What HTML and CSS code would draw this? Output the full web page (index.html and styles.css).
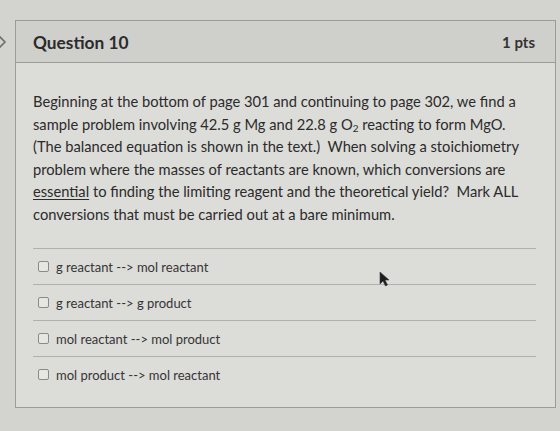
FILE: index.html
```html
<!DOCTYPE html>
<html lang="en">
<head>
  <meta charset="UTF-8">
  <meta name="viewport" content="width=device-width, initial-scale=1.0">
  <title>Question 10</title>
  <link rel="stylesheet" href="styles.css">
</head>
<body>
  <div class="page">
    <!-- Left gutter with the collapse arrow -->
    <div class="gutter">
      <svg class="chevron" width="8" height="14" viewBox="0 0 8 14">
        <path d="M-1 1 L5 7 L-1 13" fill="none" stroke="#6f6f6c" stroke-width="1.6"/>
      </svg>
    </div>

    <div class="question">
      <div class="question-header">
        <span class="question-title">Question 10</span>
        <span class="question-points">1 pts</span>
      </div>

      <div class="question-body">
        <p class="question-text">
          Beginning at the bottom of page 301 and continuing to page 302, we find a<br>
          sample problem involving 42.5 g Mg and 22.8 g O<sub>2</sub> reacting to form MgO.<br>
          (The balanced equation is shown in the text.)&nbsp; When solving a stoichiometry<br>
          problem where the masses of reactants are known, which conversions are<br>
          <u>essential</u> to finding the limiting reagent and the theoretical yield?&nbsp; Mark ALL<br>
          conversions that must be carried out at a bare minimum.
        </p>

        <div class="answers">
          <label class="answer"><span class="box"></span>g reactant --&gt; mol reactant</label>
          <label class="answer"><span class="box"></span>g reactant --&gt; g product</label>
          <label class="answer"><span class="box"></span>mol reactant --&gt; mol product</label>
          <label class="answer"><span class="box"></span>mol product --&gt; mol reactant</label>
        </div>
      </div>

      <!-- Mouse pointer resting over the first answer row -->
      <svg class="pointer" width="12" height="16" viewBox="0 0 12 16">
        <path d="M1 1 L1 13 L4 10 L6.5 15 L8.5 14 L6 9 L10 9 Z" fill="#1c1c1c" stroke="#3a3a3a" stroke-width="0.6"/>
      </svg>
    </div>
  </div>
</body>
</html>
```

FILE: styles.css
```css
* {
  margin: 0;
  padding: 0;
  box-sizing: border-box;
}

body, html {
  width: 100%;
  height: 100%;
  overflow: hidden;
}

body {
  background: #d3d3d0;
  font-family: Lato, "Open Sans", sans-serif;
  color: #2b2b2b;
}

.page {
  display: flex;
  padding-top: 20px;
}

.gutter {
  width: 15px;
  flex-shrink: 0;
  padding-top: 15px;
}

.chevron {
  display: block;
}

.question {
  position: relative;
  width: 541px;
  height: 388px;
  border: 1px solid #9b9b98;
  background: #dcdcd9;
}

.question-header {
  display: flex;
  justify-content: space-between;
  align-items: center;
  height: 42px;
  padding: 1px 20px 0 17px;
  background: #cfcfcc;
  border-bottom: 1px solid #9b9b98;
}

.question-title {
  font-size: 17.3px;
  font-weight: 700;
}

.question-points {
  font-size: 15px;
  font-weight: 700;
  color: #333;
}

.question-body {
  padding: 27px 10px 0 17px;
}

.question-text {
  font-size: 14.7px;
  line-height: 22.5px;
  white-space: nowrap;
}

.question-text sub {
  font-size: 10px;
  vertical-align: -2px;
  line-height: 0;
}

.question-text u {
  text-underline-offset: 2px;
}

.answers {
  margin-top: 23px;
  margin-right: 9px;
}

.answer {
  display: flex;
  align-items: center;
  height: 36px;
  border-top: 1px solid #b0b0ad;
  padding-left: 5px;
  font-size: 13px;
  color: #353535;
}

.box {
  width: 11px;
  height: 11px;
  border: 1px solid #8a8a88;
  border-radius: 2px;
  background: #e6e6e3;
  margin-right: 7px;
}

.pointer {
  position: absolute;
  left: 363px;
  top: 250px;
}
```
